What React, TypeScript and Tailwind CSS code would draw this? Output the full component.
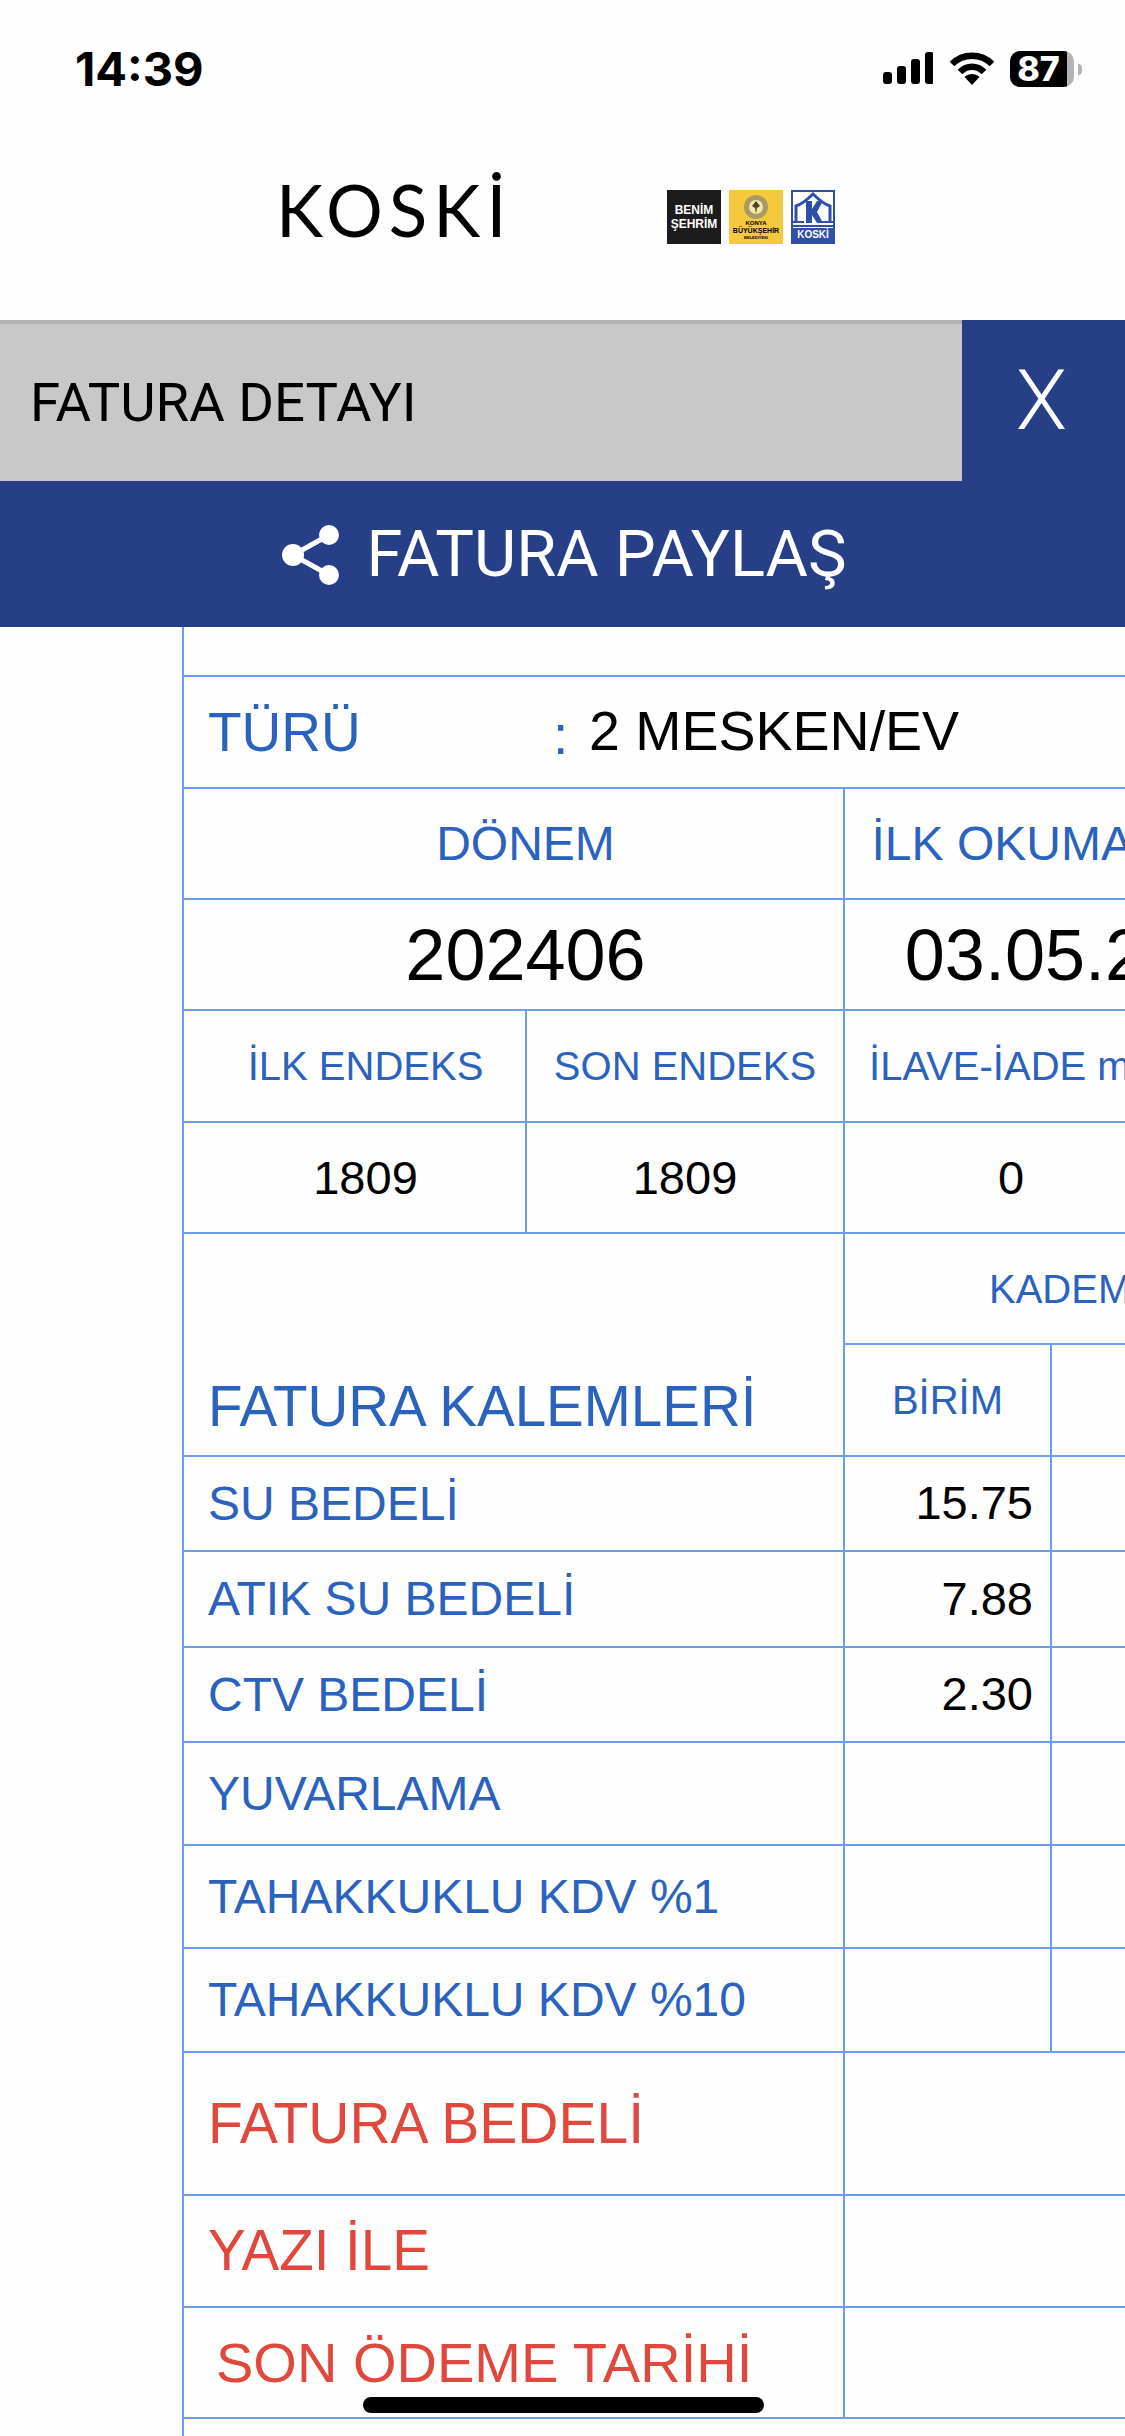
import type { ReactNode } from "react";

const LABEL = "text-[#2b62bd]";
const LINE = "border-[#6c9ceb]";

type CellProps = {
  w?: string;
  className?: string;
  children?: ReactNode;
};

function Cell({ w = "", className = "", children }: CellProps) {
  return (
    <div className={`flex shrink-0 items-center whitespace-nowrap border-r-2 ${LINE} ${w} ${className}`}>
      {children}
    </div>
  );
}

function StatusBar() {
  return (
    <div className="flex h-[136px] items-start justify-between pl-[75px] pt-[44px] pr-[43px]">
      <span className="font-['Inter',sans-serif] text-[47px] font-bold leading-[50px] text-black">14:39</span>
      <div className="flex items-center pt-[7px]">
        <svg width="50" height="34" viewBox="0 0 50 34" className="fill-black">
          <rect x="0" y="20" width="9" height="12" rx="3" />
          <rect x="14" y="14" width="9" height="18" rx="3" />
          <rect x="28" y="7" width="9" height="25" rx="3" />
          <rect x="42" y="0" width="9" height="32" rx="3" />
        </svg>
        <svg width="46" height="34" viewBox="0 0 46 34" className="ml-[16px] fill-none stroke-black" strokeWidth="6.5">
          <path d="M3 12 C14 1 32 1 43 12" />
          <path d="M11 20 C18 13 28 13 35 20" />
          <path d="M15.5 25 L23 33 L30.5 25 C26 21 20 21 15.5 25 Z" fill="#000" stroke="none" />
        </svg>
        <div className="ml-[15px] flex h-[36px] w-[64px] items-center overflow-hidden rounded-[10px] bg-[#b5b5b5]">
          <div className="flex h-full w-[57px] items-center justify-center bg-black font-['Inter',sans-serif] text-[34px] font-extrabold leading-none text-white">
            87
          </div>
        </div>
        <div className="ml-[4px] h-[11px] w-[4px] rounded-r-full bg-[#b5b5b5]" />
      </div>
    </div>
  );
}

function PartnerLogos() {
  return (
    <div className="mt-[20px] flex items-stretch gap-[8px] font-['Liberation_Sans',sans-serif]">
      <div className="flex h-[54px] w-[54px] flex-col items-center justify-center bg-[#1c1c1c] text-[12px] font-bold leading-[14px] text-white">
        <span>BENİM</span>
        <span>ŞEHRİM</span>
      </div>
      <div className="flex h-[54px] w-[54px] flex-col items-center bg-[#f6c93c] pt-[4px] text-black">
        <svg width="26" height="26" viewBox="0 0 26 26">
          <circle cx="13" cy="13" r="12" fill="#a89a63" />
          <circle cx="13" cy="13" r="7" fill="#f6e9a8" />
          <path d="M13 7 L17 12 L14 14 L13 20 L12 14 L9 12 Z" fill="#4a4636" />
        </svg>
        <span className="text-[6px] font-bold leading-[7px]">KONYA</span>
        <span className="text-[7px] font-bold leading-[8px]">BÜYÜKŞEHİR</span>
        <span className="text-[4px] font-bold leading-[5px]">BELEDİYESİ</span>
      </div>
      <div className="flex h-[54px] w-[44px] flex-col items-center justify-between border-2 border-[#2f4fa8] bg-white">
        <svg width="40" height="36" viewBox="0 0 40 36">
          <path d="M3 30 V14 C9 12 15 7 20 2 C25 7 31 12 37 14 V30" fill="none" stroke="#2f4fa8" strokeWidth="3" />
          <path d="M13 9 h6 v8 l5 -8 h6 l-6 11 l6 11 h-6 l-5 -8 v8 h-6 z" fill="#2f4fa8" />
          <path d="M0 30 H11 M29 30 H40 M0 34 H40" stroke="#2f4fa8" strokeWidth="2" />
        </svg>
        <span className="flex h-[14px] w-full items-center justify-center bg-[#2f4fa8] text-[10px] font-bold leading-none text-white">KOSKİ</span>
      </div>
    </div>
  );
}

function Header() {
  return (
    <div className="flex h-[184px] items-start pl-[276px] pt-[34px]">
      <span className="w-[391px] shrink-0 font-['Lato',sans-serif] text-[71px] font-normal leading-[80px] tracking-[6px] text-black">
        KOSKİ
      </span>
      <PartnerLogos />
    </div>
  );
}

function ShareIcon() {
  return (
    <svg width="58" height="62" viewBox="0 0 58 62" className="fill-white stroke-white">
      <path d="M47 11 L11 31 L47 51" fill="none" strokeWidth="5" />
      <circle cx="47" cy="11" r="10" stroke="none" />
      <circle cx="11" cy="31" r="11" stroke="none" />
      <circle cx="47" cy="51" r="10" stroke="none" />
    </svg>
  );
}

function TitleBars() {
  return (
    <div className="bg-[#263f87] font-['Roboto',sans-serif] font-normal text-white">
      <div className="flex h-[161px]">
        <div className="flex w-[962px] items-center border-t-4 border-[#b2b2b2] bg-[#c8c8c8] pl-[30px] text-[54.5px] text-black">
          FATURA DETAYI
        </div>
        <div className="flex flex-1 items-center justify-center pr-[4px] text-[84px] font-light">X</div>
      </div>
      <div className="flex h-[146px] items-center justify-center gap-[26px] pl-[4px] pt-[2px] text-[65px]">
        <ShareIcon />
        <span>FATURA PAYLAŞ</span>
      </div>
    </div>
  );
}

const COL_A = "w-[343px]";
const COL_LEFT = "w-[661px]";
const COL_BIRIM = "w-[207px]";

function Bill() {
  return (
    <div className={`flex w-[1600px] flex-col border-l-2 ${LINE} font-['Liberation_Sans',sans-serif] text-black`}>
      <div className={`h-[50px] border-b-2 ${LINE}`} />

      <div className={`flex h-[112px] items-center border-b-2 ${LINE} pl-[24px]`}>
        <span className={`w-[345px] text-[55px] ${LABEL}`}>TÜRÜ</span>
        <span className={`w-[36px] pt-[6px] text-[55px] ${LABEL}`}>:</span>
        <span className="whitespace-nowrap text-[55.5px]">2 MESKEN/EV</span>
      </div>

      <div className={`flex h-[111px] border-b-2 ${LINE} text-[48px] ${LABEL}`}>
        <Cell w={COL_LEFT} className="justify-center pl-[24px]">DÖNEM</Cell>
        <Cell w="w-[480px]" className="justify-center">İLK OKUMA TARİHİ</Cell>
      </div>
      <div className={`flex h-[111px] border-b-2 ${LINE} text-[72px]`}>
        <Cell w={COL_LEFT} className="justify-center pl-[24px]">202406</Cell>
        <Cell w="w-[482px]" className="justify-center">03.05.2024</Cell>
      </div>

      <div className={`flex h-[112px] border-b-2 ${LINE} text-[40px] ${LABEL}`}>
        <Cell w={COL_A} className="justify-center pl-[22px]">İLK ENDEKS</Cell>
        <Cell w="w-[318px]" className="justify-center">SON ENDEKS</Cell>
        <Cell w="w-[334px]" className="justify-center">İLAVE-İADE m3</Cell>
      </div>
      <div className={`flex h-[111px] border-b-2 ${LINE} text-[47px]`}>
        <Cell w={COL_A} className="justify-center pl-[22px] pt-[2px]">1809</Cell>
        <Cell w="w-[318px]" className="justify-center pt-[2px]">1809</Cell>
        <Cell w="w-[334px]" className="justify-center pt-[2px]">0</Cell>
      </div>

      <div className={`flex h-[223px] border-b-2 ${LINE}`}>
        <div className={`flex ${COL_LEFT} shrink-0 items-end border-r-2 ${LINE} pb-[5px] pl-[24px] text-[56.5px] ${LABEL}`}>
          FATURA KALEMLERİ
        </div>
        <div className={`flex flex-1 flex-col text-[40px] ${LABEL}`}>
          <div className={`flex h-[111px] items-center border-b-2 ${LINE} pl-[144px]`}>KADEME 1</div>
          <div className="flex flex-1">
            <Cell w={COL_BIRIM} className="justify-center">BİRİM</Cell>
          </div>
        </div>
      </div>

      {[
        ["SU BEDELİ", "15.75", "h-[95px]"],
        ["ATIK SU BEDELİ", "7.88", "h-[96px]"],
        ["CTV BEDELİ", "2.30", "h-[95px]"],
        ["YUVARLAMA", "", "h-[103px]"],
        ["TAHAKKUKLU KDV %1", "", "h-[103px]"],
        ["TAHAKKUKLU KDV %10", "", "h-[104px]"],
      ].map(([label, unit, height]) => (
        <div key={label} className={`flex ${height} border-b-2 ${LINE}`}>
          <Cell w={COL_LEFT} className={`pl-[24px] text-[48px] ${LABEL}`}>{label}</Cell>
          <Cell w={COL_BIRIM} className="justify-end pr-[17px] text-[47px]">{unit}</Cell>
        </div>
      ))}

      <div className={`flex h-[143px] border-b-2 ${LINE} text-[57px] text-[#e0473d]`}>
        <Cell w={COL_LEFT} className="pl-[24px]">FATURA BEDELİ</Cell>
      </div>
      <div className={`flex h-[112px] border-b-2 ${LINE} text-[56.5px] text-[#e0473d]`}>
        <Cell w={COL_LEFT} className="pl-[24px]">YAZI İLE</Cell>
      </div>
      <div className={`flex h-[111px] border-b-2 ${LINE} text-[56px] text-[#e0473d]`}>
        <Cell w={COL_LEFT} className="pl-[32px]">SON ÖDEME TARİHİ</Cell>
      </div>
      <div className="h-[40px]" />
    </div>
  );
}

export default function App() {
  return (
    <div className="relative h-[2436px] w-[1125px] overflow-hidden bg-[#fefefe]">
      <StatusBar />
      <Header />
      <TitleBars />
      <div className="pl-[182px]">
        <Bill />
      </div>
      <div className="absolute bottom-[23px] left-[363px] h-[16px] w-[401px] rounded-full bg-black" />
    </div>
  );
}
